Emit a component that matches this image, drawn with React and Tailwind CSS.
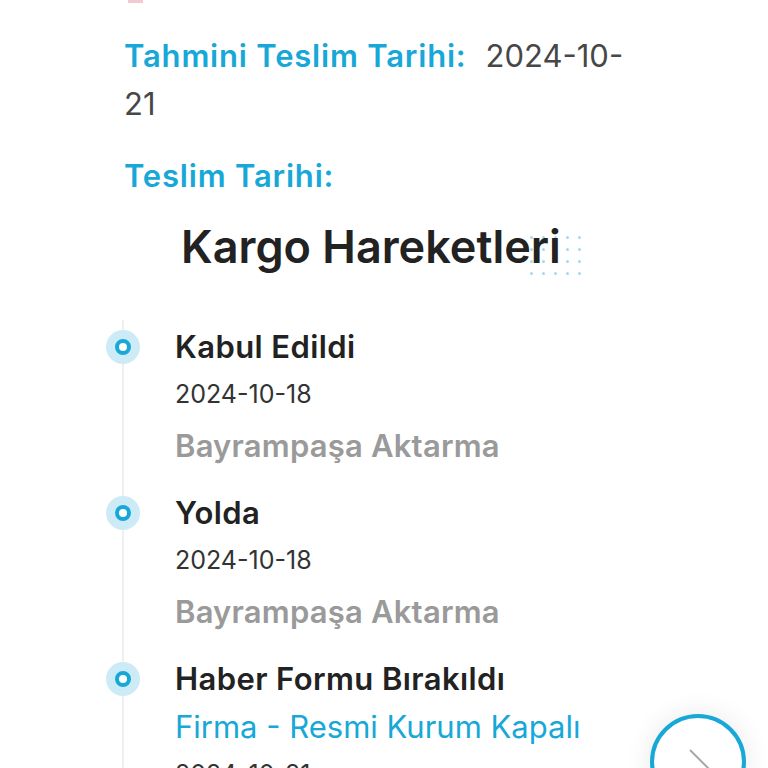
const cyan = 'text-[#17a8d8]'

const movements = [
  { title: 'Kabul Edildi', date: '2024-10-18', place: 'Bayrampaşa Aktarma' },
  { title: 'Yolda', date: '2024-10-18', place: 'Bayrampaşa Aktarma' },
  { title: 'Haber Formu Bırakıldı', note: 'Firma - Resmi Kurum Kapalı', date: '2024-10-21' },
]

const Dot = () => (
  <span className="absolute -left-[18px] top-[3px] flex h-[34px] w-[34px] items-center justify-center rounded-full bg-[#cdebf6]">
    <span className="h-[16px] w-[16px] rounded-full border-[4px] border-[#17a8d8] bg-white" />
  </span>
)

export default function App() {
  return (
    <div className="relative h-[768px] overflow-hidden bg-white font-['Inter',sans-serif]">
      {/* kesik üst öğe */}
      <div className="ml-[128px] h-[3px] w-[15px] bg-[#f6c9d2]" />

      <div className="ml-[124px] w-[500px] pt-[29px]">
        <p className="text-[31px] leading-[48px]">
          <span className={`font-semibold tracking-[0.8px] ${cyan}`}>Tahmini Teslim Tarihi:</span>
          <span className="ml-[19px] text-[#474747]">2024-10-21</span>
        </p>
        <p className={`mt-[24px] text-[31px] font-semibold leading-[48px] tracking-[0.8px] ${cyan}`}>Teslim Tarihi:</p>

        {/* Başlık */}
        <div className="mt-[19px] flex justify-center pr-[6px]">
          <h2 className="relative text-[45px] font-semibold leading-[56px] text-[#222]">
            <span className="absolute -right-[20px] top-[17px] grid grid-cols-5 gap-[9px]">
              {Array.from({ length: 20 }).map((_, i) => (
                <span key={i} className="h-[3px] w-[3px] rounded-full bg-[#a3dcee]" />
              ))}
            </span>
            <span className="relative">Kargo Hareketleri</span>
          </h2>
        </div>

        {/* Hareketler */}
        <ul className="ml-[-2px] mt-[45px] border-l-2 border-[#eeeff1] pt-[7px]">
          {movements.map((m, i) => (
            <li key={i} className="relative pb-[27px] pl-[51px]">
              <Dot />
              <p className="text-[31px] font-semibold leading-[40px] tracking-[0.4px] text-[#222]">{m.title}</p>
              {m.note && <p className={`mt-[8px] text-[31px] leading-[40px] ${cyan}`}>{m.note}</p>}
              <p className="mt-[7px] text-[25px] leading-[40px] text-[#333]">{m.date}</p>
              {m.place && <p className="mt-[12px] text-[31px] font-semibold leading-[40px] tracking-[0.2px] text-[#9a9a9a]">{m.place}</p>}
            </li>
          ))}
        </ul>
      </div>

      {/* yukarı çık butonu */}
      <button className="fixed left-[650px] top-[714px] h-[96px] w-[96px] rounded-full border-[4px] border-[#17a8d8] bg-white shadow-[0_0_28px_rgba(0,0,0,0.09)]">
        <svg className="absolute left-[30px] top-[26px]" width="40" height="40" viewBox="0 0 40 40">
          <path d="M6 6 L30 30" stroke="#a8a8a8" strokeWidth="2" fill="none" />
        </svg>
      </button>
    </div>
  )
}
